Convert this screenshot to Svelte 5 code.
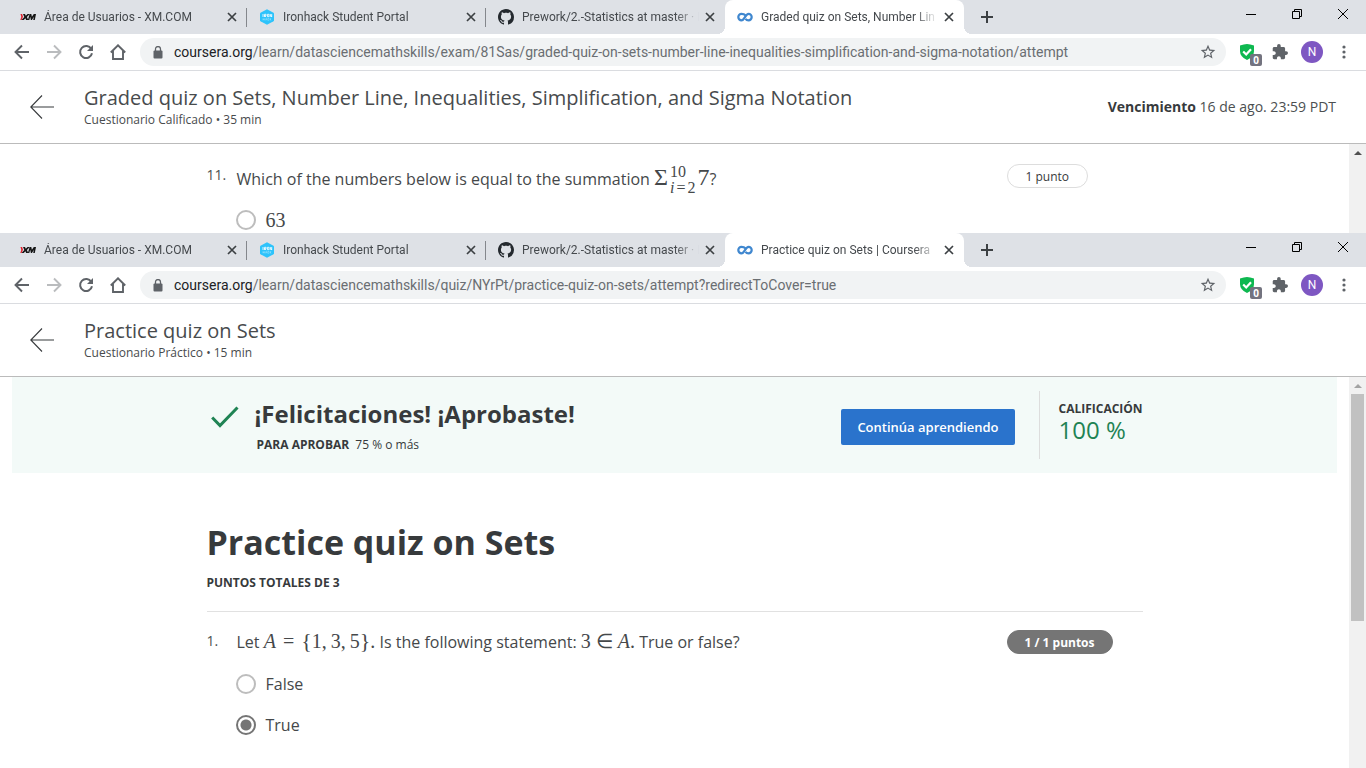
<script>
  const windows = [
    {
      id: 'graded',
      tab: 'Graded quiz on Sets, Number Lin',
      path: '/learn/datasciencemathskills/exam/81Sas/graded-quiz-on-sets-number-line-inequalities-simplification-and-sigma-notation/attempt',
      title: 'Graded quiz on Sets, Number Line, Inequalities, Simplification, and Sigma Notation',
      info: 'Cuestionario Calificado • 35 min',
      due: '16 de ago. 23:59 PDT'
    },
    {
      id: 'practice',
      tab: 'Practice quiz on Sets | Coursera',
      path: '/learn/datasciencemathskills/quiz/NYrPt/practice-quiz-on-sets/attempt?redirectToCover=true',
      title: 'Practice quiz on Sets',
      info: 'Cuestionario Práctico • 15 min',
      due: ''
    }
  ];

  const tabsFor = (w) => [
    { icon: 'xm', text: 'Área de Usuarios - XM.COM' },
    { icon: 'iron', text: 'Ironhack Student Portal' },
    { icon: 'github', text: 'Prework/2.-Statistics at master · N' },
    { icon: 'coursera', text: w.tab, active: true }
  ];

  let answer = $state('true');
</script>

{#snippet favicon(name)}
  <svg class="favicon" viewBox="0 0 16 16" aria-hidden="true">
    {#if name === 'xm'}
      <path d="M0.500 5h1.600l.9 2.700L1.600 11H.3l1-3z" fill="#e0202c" />
      <path d="M3 5h2l.8 1.700L7.600 5h2.200L6.900 7.900 8.300 11H6.100l-.7-1.700L3.700 11H1.500l2.800-3z" fill="#161616" />
      <path d="M9.600 5h1.700l.6 2.800L13.800 5H16l-1.200 6h-1.600l.7-3.200L11.900 11h-1l-.7-3.200L9.300 11H7.900z" fill="#161616" />
    {:else if name === 'iron'}
      <path d="M8 0.300 14.500 3.700q.5.300.5.900v6.800q0 .6-.5.900L8 15.800 1.500 12.300q-.5-.3-.5-.9V4.600q0-.6.500-.9z" fill="#2dc3fb" />
      <path d="M4 5v3M5.500 8V5.300h1.600v1.400H5.500L7.100 8M8.500 5.300h1.400v2.400H8.500zM11.200 8V5.300L12.700 8V5" fill="none" stroke="#fff" stroke-width=".8" />
      <path d="M4 9.300v2M5.300 9.300v2M4 10.300h1.300M6.500 11.300l.7-2 .7 2M10 9.500H8.800v1.700H10M11 9.300v2M12.200 9.300l-1.200 1 1.200 1" fill="none" stroke="#b5e9fd" stroke-width=".5" />
    {:else if name === 'github'}
      <path fill="#24292e" d="M8 0C3.580 0 0 3.580 0 8c0 3.540 2.290 6.530 5.470 7.590.4.070.55-.17.55-.38 0-.19-.01-.82-.01-1.490-2.010.37-2.530-.49-2.690-.94-.09-.23-.48-.94-.82-1.130-.28-.15-.68-.52-.01-.53.63-.01 1.080.58 1.230.82.72 1.210 1.870.87 2.330.66.070-.52.28-.87.510-1.070-1.780-.2-3.640-.89-3.640-3.950 0-.87.310-1.590.82-2.150-.08-.2-.36-1.020.08-2.120 0 0 .67-.21 2.200.82.64-.18 1.320-.27 2-.27s1.360.09 2 .27c1.530-1.040 2.200-.82 2.200-.82.44 1.100.16 1.920.08 2.120.51.56.82 1.270.82 2.150 0 3.070-1.870 3.750-3.650 3.950.29.25.54.73.54 1.480 0 1.070-.01 1.930-.01 2.200 0 .21.15.46.55.38A8.010 8.010 0 0 0 16 8c0-4.420-3.580-8-8-8z" />
    {:else}
      <path d="M8.300 6.300C7.400 5.200 6 4.900 4.500 4.900a3.200 3.200 0 0 0 0 6.400C7.700 11.300 8.300 4.900 11.500 4.900a3.200 3.200 0 0 1 0 6.400c-1.300 0-2.300-.5-3-1.500" fill="none" stroke="#3f87cf" stroke-width="2.200" />
    {/if}
  </svg>
{/snippet}

{#snippet chrome(w)}
  <div class="tabstrip">
    <div class="tabs">
      {#each tabsFor(w) as tab}
        <div class="tab" class:active={tab.active}>
          {@render favicon(tab.icon)}
          <a class="tab-text" href="#{w.id}">{tab.text}</a>
          <button class="close" type="button" aria-label="Close tab">
            <svg width="10" height="10" viewBox="0 0 10 10"><path d="M1 1l8 8M9 1L1 9" stroke="#3c4043" stroke-width="1.700" /></svg>
          </button>
        </div>
      {/each}
      <button class="new-tab" type="button" aria-label="New tab">
        <svg width="12" height="12" viewBox="0 0 12 12"><path d="M6 0v12M0 6h12" stroke="#3c4043" stroke-width="2" /></svg>
      </button>
    </div>
    <div class="controls">
      <button type="button" aria-label="Minimize"><svg width="10" height="10" viewBox="0 0 10 10"><path d="M0 5.500h10" stroke="#000" /></svg></button>
      <button type="button" aria-label="Restore"><svg width="10" height="10" viewBox="0 0 10 10"><path d="M.5 2.500h7v7h-7zM2.500 2.500v-2h7v7h-2" fill="none" stroke="#000" /></svg></button>
      <button type="button" aria-label="Close window"><svg width="10" height="10" viewBox="0 0 10 10"><path d="M0 0l10 10M10 0L0 10" stroke="#000" /></svg></button>
    </div>
  </div>

  <div class="toolbar">
    <div class="tools">
      <button type="button" aria-label="Back"><svg width="16" height="16" viewBox="0 0 16 16"><path d="M15 8H2M8 1.500L1.500 8 8 14.500" fill="none" stroke="#5f6368" stroke-width="1.900" /></svg></button>
      <button type="button" aria-label="Forward"><svg width="16" height="16" viewBox="0 0 16 16"><path d="M1 8h13M8 1.500L14.500 8 8 14.500" fill="none" stroke="#babcbe" stroke-width="1.900" /></svg></button>
      <button type="button" aria-label="Reload"><svg width="16" height="16" viewBox="0 0 16 16"><path d="M13.300 5A6 6 0 1 0 14 9.300" fill="none" stroke="#5f6368" stroke-width="2" /><path d="M15 1v6H9z" fill="#5f6368" /></svg></button>
      <button type="button" aria-label="Home"><svg width="16" height="16" viewBox="0 0 16 16"><path d="M.8 8.500L8 1.300l7.200 7.200M3 7v8h10V7" fill="none" stroke="#5f6368" stroke-width="1.900" /></svg></button>
    </div>
    <form class="omnibox">
      <svg width="10" height="13" viewBox="0 0 10 13" aria-hidden="true"><path d="M2.500 5V3a2.500 2.500 0 0 1 5 0v2" fill="none" stroke="#5f6368" stroke-width="1.300" /><rect x="0.500" y="4.500" width="9" height="8" rx="1" fill="#5f6368" /></svg>
      <label for="url-{w.id}">coursera.org</label>
      <input id="url-{w.id}" type="text" value={w.path} spellcheck="false" />
      <button type="button" aria-label="Bookmark this page"><svg width="16" height="16" viewBox="1 1 22 22"><path fill="#5f6368" d="M22 9.240l-7.190-.62L12 2 9.190 8.630 2 9.240l5.460 4.730L5.820 21 12 17.270 18.180 21l-1.630-7.030L22 9.240zM12 15.400l-3.760 2.270 1-4.280-3.320-2.880 4.380-.38L12 6.100l1.710 4.040 4.380.38-3.320 2.880 1 4.280L12 15.400z" /></svg></button>
    </form>
    <div class="tools">
      <button class="shield" type="button" aria-label="Protection">
        <svg width="16" height="16" viewBox="0 0 16 16"><path d="M0 1.500Q4 0 7 0t7 1.500V7q0 6-7 9-7-3-7-9z" fill="#0eb850" /><path d="M3.200 7.500l3 3L11 5.300" fill="none" stroke="#fff" stroke-width="2.200" /></svg>
        <span class="count">0</span>
      </button>
      <button type="button" aria-label="Extensions"><svg width="16" height="16" viewBox="1 1 22 22"><path fill="#5f6368" d="M20.500 11H19V7c0-1.100-.9-2-2-2h-4V3.500a2.500 2.500 0 0 0-5 0V5H4c-1.100 0-1.990.9-1.990 2v3.800H3.500c1.490 0 2.700 1.210 2.700 2.700s-1.210 2.700-2.700 2.700H2V20c0 1.100.9 2 2 2h3.800v-1.500c0-1.490 1.210-2.700 2.700-2.700s2.700 1.210 2.700 2.700V22H17c1.100 0 2-.9 2-2v-4h1.500a2.500 2.500 0 0 0 0-5z" /></svg></button>
      <button type="button" aria-label="Profile"><span class="avatar">N</span></button>
      <button type="button" aria-label="Menu"><svg width="4" height="14" viewBox="0 0 4 14" fill="#5f6368"><circle cx="2" cy="2" r="1.600" /><circle cx="2" cy="7" r="1.600" /><circle cx="2" cy="12" r="1.600" /></svg></button>
    </div>
  </div>

  <header class="quiz-head">
    <a class="back" href="#{w.id}" aria-label="Volver">
      <svg width="24" height="24" viewBox="0 0 24 24"><path d="M12 .5L.8 12 12 23.500M.8 12H24" fill="none" stroke="#373a3c" stroke-width="1.100" /></svg>
    </a>
    <div class="names">
      <h2>{w.title}</h2>
      <p>{w.info}</p>
    </div>
    {#if w.due}
      <p class="due"><strong>Vencimiento</strong> {w.due}</p>
    {/if}
  </header>
{/snippet}

<div class="page">
  <section class="window">
    {@render chrome(windows[0])}
    <div class="view">
      <main class="content">
        <div class="question first">
          <span class="number">11.</span>
          <fieldset>
            <legend>Which of the numbers below is equal to the summation <span class="math"><span class="big">Σ</span><span class="limits"><span>10</span><span><i>i</i><span class="equals">=</span>2</span></span><span class="big">7</span></span>?</legend>
            <label class="option"><input type="radio" name="q11" value="63" /><span class="math">63</span></label>
          </fieldset>
          <div class="points"><span class="pill">1 punto</span></div>
        </div>
      </main>
      <div class="scrollbar" aria-hidden="true">
        <span class="arrow"></span>
      </div>
    </div>
  </section>

  <section class="window last">
    {@render chrome(windows[1])}
    <div class="view">
      <main class="content">
        <div class="banner">
          <div class="banner-inner">
            <svg class="check" width="28" height="22" viewBox="0 0 28 22" aria-hidden="true"><path d="M1.200 11.500L9 19.500 26.500 1.500" fill="none" stroke="#1f8354" stroke-width="3" /></svg>
            <div class="passed">
              <h3>¡Felicitaciones! ¡Aprobaste!</h3>
              <p><strong>PARA APROBAR</strong> 75 % o más</p>
            </div>
            <button class="continue" type="button">Continúa aprendiendo</button>
            <div class="grade">
              <strong>CALIFICACIÓN</strong>
              <span>100 %</span>
            </div>
          </div>
        </div>
        <div class="intro">
          <h1>Practice quiz on Sets</h1>
          <p>PUNTOS TOTALES DE 3</p>
        </div>
        <div class="question">
          <span class="number">1.</span>
          <fieldset>
            <legend>Let <span class="math"><i>A</i> <span class="equals">=</span> <span class="brace">&lbrace;</span>1,&thinsp;3,&thinsp;5<span class="brace">&rbrace;</span>.</span> Is the following statement: <span class="math">3 ∈ <i>A</i>.</span> True or false?</legend>
            <label class="option"><input type="radio" name="q1" value="false" bind:group={answer} />False</label>
            <label class="option"><input type="radio" name="q1" value="true" bind:group={answer} />True</label>
          </fieldset>
          <div class="points"><span class="pill solid">1 / 1 puntos</span></div>
        </div>
      </main>
      <div class="scrollbar" aria-hidden="true">
        <span class="arrow dim"></span>
        <span class="thumb"></span>
      </div>
    </div>
  </section>
</div>

<style>
  :global(body) {
    background: #fff;
  }
  * {
    box-sizing: border-box;
  }
  h1, h2, h3, p, fieldset, legend {
    margin: 0;
    padding: 0;
    border: 0;
  }
  button {
    display: flex;
    align-items: center;
    justify-content: center;
    padding: 0;
    border: 0;
    background: none;
    font: inherit;
  }
  svg {
    display: block;
    flex: none;
  }
  .page {
    display: flex;
    flex-direction: column;
    min-height: 100vh;
    font-family: "Open Sans", sans-serif;
    color: #373a3c;
  }
  .window {
    display: flex;
    flex-direction: column;
  }
  .window.last {
    flex: 1;
  }

  .tabstrip {
    display: flex;
    justify-content: space-between;
    height: 34px;
    padding-left: 8px;
    background: #dee1e6;
    font: 12px Roboto, sans-serif;
  }
  .tabs {
    display: flex;
    flex: 1;
    min-width: 0;
  }
  .tab {
    position: relative;
    display: flex;
    align-items: center;
    flex: 0 1 239px;
    min-width: 0;
    padding: 0 7px 0 12px;
  }
  .tab:not(.active)::after {
    content: "";
    position: absolute;
    right: 0;
    top: 8px;
    width: 1px;
    height: 19px;
    background: #84878c;
  }
  .tab:has(+ .active)::after {
    display: none;
  }
  .tab.active {
    border-radius: 8px 8px 0 0;
    background: #fff;
  }
  .tab.active::before,
  .tab.active::after {
    content: "";
    position: absolute;
    bottom: 0;
    width: 8px;
    height: 8px;
  }
  .tab.active::before {
    right: 100%;
    background: radial-gradient(circle at 0 0, transparent 8px, #fff 8px);
  }
  .tab.active::after {
    left: 100%;
    background: radial-gradient(circle at 100% 0, transparent 8px, #fff 8px);
  }
  .favicon {
    width: 16px;
    height: 16px;
  }
  .tab-text {
    flex: 1;
    min-width: 0;
    margin: 0 3px 0 8px;
    overflow: hidden;
    white-space: nowrap;
    color: #45494d;
    text-decoration: none;
    mask-image: linear-gradient(to right, #000 calc(100% - 24px), transparent);
  }
  .close {
    width: 16px;
    height: 16px;
  }
  .new-tab {
    width: 28px;
    margin-left: 9px;
  }
  .controls {
    display: flex;
    height: 28px;
  }
  .controls button {
    width: 46px;
  }

  .toolbar {
    display: flex;
    align-items: center;
    gap: 6px;
    height: 37px;
    padding: 0 6px;
    border-bottom: 1px solid #dadce0;
  }
  .tools {
    display: flex;
  }
  .tools button {
    width: 32px;
    height: 28px;
  }
  .omnibox {
    display: flex;
    align-items: center;
    flex: 1;
    min-width: 0;
    height: 28px;
    padding: 0 10px 0 13px;
    border-radius: 14px;
    background: #f1f3f4;
    font: 14px Roboto, sans-serif;
  }
  .omnibox label {
    margin-left: 11px;
    color: #202124;
  }
  .omnibox input {
    flex: 1;
    min-width: 0;
    padding: 0;
    border: 0;
    outline: 0;
    background: none;
    font: inherit;
    color: #6a6e72;
  }
  .shield {
    position: relative;
  }
  .count {
    position: absolute;
    left: 18px;
    top: 16px;
    width: 12px;
    border-radius: 2px;
    background: #73737f;
    color: #fff;
    font: bold 10px/12px "Noto Sans", sans-serif;
  }
  .avatar {
    width: 22px;
    border-radius: 50%;
    background: #7e57c2;
    color: #fff;
    font: 12px/22px Roboto, sans-serif;
  }

  .quiz-head {
    display: flex;
    align-items: center;
    height: 73px;
    padding: 0 30px 2px;
    border-bottom: 1px solid #bbb;
  }
  .back {
    padding-top: 2px;
  }
  .names {
    flex: 1;
    min-width: 0;
    margin-left: 30px;
    color: #484b4d;
  }
  h2 {
    font-size: 20px;
    font-weight: 400;
    line-height: 28px;
  }
  .names p {
    font-size: 12px;
    line-height: 16px;
  }
  .due {
    font-size: 14px;
    color: #4c4f51;
  }
  .due strong {
    color: #373a3c;
  }

  .view {
    display: flex;
    flex: 1;
  }
  .content {
    flex: 1;
    min-width: 0;
  }
  .scrollbar {
    display: flex;
    flex-direction: column;
    align-items: center;
    width: 17px;
    background: #f1f1f1;
  }
  .arrow {
    margin: 7px 0 6px;
    border: 4px solid transparent;
    border-top: 0;
    border-bottom-color: #505050;
  }
  .arrow.dim {
    border-bottom-color: #a3a3a3;
  }
  .thumb {
    width: 13px;
    height: 58%;
    background: #c1c1c1;
  }

  .banner {
    margin: 0 12px;
    background: #f3faf8;
  }
  .banner-inner {
    display: flex;
    align-items: center;
    max-width: 936px;
    height: 96px;
    margin: 0 auto;
    padding-left: 4px;
  }
  .check {
    margin-bottom: 16px;
  }
  .passed {
    flex: 1;
    margin: 7px 0 0 16px;
  }
  h3 {
    font-size: 24px;
    font-weight: 700;
    line-height: 32px;
  }
  .passed p {
    padding-left: 2px;
    font-size: 12px;
    line-height: 30px;
  }
  .passed strong {
    margin-right: 3px;
    font-weight: 700;
  }
  .continue {
    height: 36px;
    padding: 0 16px;
    border-radius: 2px;
    margin: 4px 24px 0 0;
    background: #2a73cc;
    color: #fff;
    font-size: 13px;
    font-weight: 600;
  }
  .grade {
    display: flex;
    flex-direction: column;
    width: 104px;
    height: 68px;
    padding: 9px 0 0 19px;
    border-left: 1px solid #ddd;
  }
  .grade strong {
    font-size: 12px;
    font-weight: 700;
    line-height: 18px;
  }
  .grade span {
    color: #1f8354;
    font-size: 24px;
    line-height: 24px;
  }

  .intro,
  .question {
    max-width: 936px;
    margin: 0 auto;
  }
  .intro {
    padding: 45px 0 19px;
    border-bottom: 1px solid #e1e1e1;
  }
  h1 {
    font-size: 34px;
    font-weight: 700;
    line-height: 48px;
  }
  .intro p {
    margin-top: 8px;
    font-size: 12px;
    font-weight: 700;
    line-height: 18px;
  }
  .question {
    display: flex;
    align-items: flex-start;
    padding-top: 18px;
  }
  .question.first {
    padding: 20px 0 2px;
  }
  .number {
    width: 29px;
    color: #4c4f51;
    font-size: 14px;
    line-height: 22px;
  }
  fieldset {
    flex: 1;
    min-width: 0;
    font-size: 16px;
    color: #45484a;
  }
  legend {
    height: 24px;
    margin-bottom: 9px;
    padding-left: 1px;
    line-height: 24px;
    white-space: nowrap;
  }
  .math {
    font-family: "Liberation Serif", serif;
    font-size: 20px;
    line-height: 20px;
  }
  .big {
    font-size: 24px;
  }
  .brace {
    font-size: 22px;
  }
  .equals {
    margin: 0 2px;
  }
  .limits {
    display: inline-flex;
    flex-direction: column;
    margin: 0 2px;
    vertical-align: middle;
    font-size: 16px;
    line-height: 16px;
  }
  .option {
    display: flex;
    align-items: center;
    gap: 10px;
    height: 41px;
  }
  .option input {
    width: 20px;
    height: 20px;
    margin: 0;
    border: 2px solid #bdbdbd;
    border-radius: 50%;
    appearance: none;
    background: #fff;
  }
  .option input:checked {
    border-color: #757575;
    background: radial-gradient(circle, #757575 5px, #fff 6px);
  }
  .first .option {
    height: 34px;
    padding-top: 12px;
  }
  .points {
    width: 136px;
  }
  .pill {
    display: inline-block;
    height: 24px;
    padding: 0 18px;
    border: 1px solid #ddd;
    border-radius: 12px;
    font-size: 12px;
    line-height: 23px;
  }
  .pill.solid {
    padding: 0 17px;
    border-color: #757575;
    background: #757575;
    color: #fff;
    font-weight: 700;
  }
</style>
